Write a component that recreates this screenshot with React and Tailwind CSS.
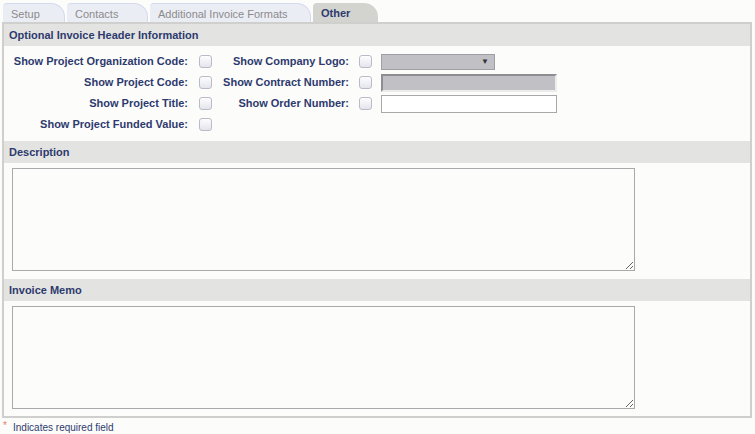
const tabs = [
  { label: 'Setup', w: 'w-[62px]' },
  { label: 'Contacts', w: 'w-[81px]' },
  { label: 'Additional Invoice Formats', w: 'w-[161px]' },
  { label: 'Other', w: 'w-[65px]', active: true },
]

function Check() {
  return (
    <span className="block w-[13px] h-[13px] rounded-[3px] border border-[#babbc6] bg-gradient-to-b from-[#fdfdff] to-[#e4e5ec]" />
  )
}

function Label({ children, w }) {
  return (
    <span className={`${w} text-right font-bold text-[11px] text-[#2e3a6e] whitespace-nowrap`}>{children}</span>
  )
}

function SectionHead({ children }) {
  return (
    <div className="h-[22px] bg-[#e3e4e1] flex items-center pl-[5px] font-bold text-[11px] text-[#2e3a6e]">
      {children}
    </div>
  )
}

export default function App() {
  return (
    <div className="w-[755px] h-[434px] bg-[#fcfdfb] font-['Liberation_Sans',Arial,sans-serif] overflow-hidden">
      <div className="flex gap-[2px] pl-[3px] pt-[3px]">
        {tabs.map((t) => (
          <div
            key={t.label}
            className={`${t.w} h-[19px] rounded-tl-[4px] rounded-tr-[14px] flex items-center pl-[8px] pt-[2px] text-[11px] ${
              t.active
                ? 'bg-[#d3d4d0] text-[#2e3a6e] font-bold'
                : 'bg-[#ebedf5] text-[#8b8b8b] border-r border-t border-[#d4daee]'
            }`}
          >
            {t.label}
          </div>
        ))}
      </div>

      <div className="ml-[2px] w-[750px] border-2 border-[#cfd0cd] pb-[7px]">
        <SectionHead>Optional Invoice Header Information</SectionHead>

        <div className="pt-[5px] pb-[6px]">
          <div className="h-[21px] flex items-center">
            <Label w="w-[184px]">Show Project Organization Code:</Label>
            <span className="ml-[11px]"><Check /></span>
            <Label w="w-[137px]">Show Company Logo:</Label>
            <span className="ml-[10px]"><Check /></span>
            <div className="ml-[9px] w-[114px] h-[16px] bg-[#c1c0c4] border border-[#a19fa4] flex items-center justify-end pr-[5px] text-[8px] text-[#333]">
              ▼
            </div>
          </div>
          <div className="h-[21px] flex items-center">
            <Label w="w-[184px]">Show Project Code:</Label>
            <span className="ml-[11px]"><Check /></span>
            <Label w="w-[137px]">Show Contract Number:</Label>
            <span className="ml-[10px]"><Check /></span>
            <div className="ml-[9px] w-[176px] h-[18px] bg-[#c1c0c4] border-2 border-t-[#8e8d91] border-l-[#8e8d91] border-b-[#ececec] border-r-[#ececec]" />
          </div>
          <div className="h-[21px] flex items-center">
            <Label w="w-[184px]">Show Project Title:</Label>
            <span className="ml-[11px]"><Check /></span>
            <Label w="w-[137px]">Show Order Number:</Label>
            <span className="ml-[10px]"><Check /></span>
            <div className="ml-[9px] w-[176px] h-[18px] bg-white border border-[#a8a8a8]" />
          </div>
          <div className="h-[21px] flex items-center">
            <Label w="w-[184px]">Show Project Funded Value:</Label>
            <span className="ml-[11px]"><Check /></span>
          </div>
        </div>

        <SectionHead>Description</SectionHead>
        <div className="pt-[5px] pb-[8px] pl-[8px]">
          <textarea className="block w-[623px] h-[103px] bg-[#fcfdfb] border border-[#a9a9ab] outline-none" />
        </div>

        <SectionHead>Invoice Memo</SectionHead>
        <div className="pt-[5px] pl-[8px]">
          <textarea className="block w-[623px] h-[103px] bg-[#fcfdfb] border border-[#a9a9ab] outline-none" />
        </div>
      </div>

      <div className="flex items-start pl-[3px] pt-[3px] text-[10px] text-[#2e3a6e]">
        <span className="text-[#f07a5a] w-[10px] leading-[10px]">*</span>
        <span className="leading-[14px]">Indicates required field</span>
      </div>
    </div>
  )
}
